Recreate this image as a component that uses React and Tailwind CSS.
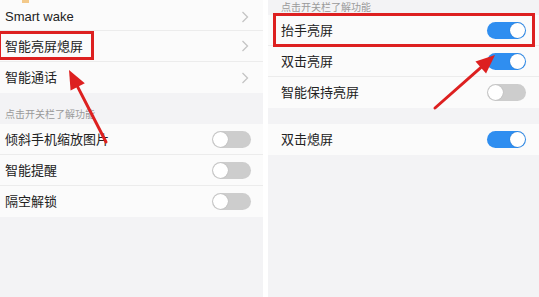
import React from 'react';

const Chevron = () => (
    <svg width="8" height="12" viewBox="0 0 8 12" className="shrink-0">
        <path d="M1.5 1 L6.5 6 L1.5 11" fill="none" stroke="#c4c4c4" strokeWidth="1.3" />
    </svg>
);

const Toggle = ({ on }) => (
    <div className={`w-[39px] h-[17px] rounded-full relative shrink-0 ${on ? 'bg-[#2f8ef0]' : 'bg-[#cdcdcd]'}`}>
        <div className={`absolute top-[1px] w-[15px] h-[15px] rounded-full bg-white shadow-[0_0_1px_rgba(0,0,0,0.3)] ${on ? 'right-[1px]' : 'left-[1px]'}`}></div>
    </div>
);

const Row = ({ label, right, pl, pr, h = 'h-[31px]', last }) => (
    <div className={`${h} ${pl} ${pr} flex items-center justify-between bg-[#fbfbfb] ${last ? '' : 'border-b border-[#ececec]'}`}>
        <span className="text-[13px] text-[#222] leading-none">{label}</span>
        {right}
    </div>
);

const Arrow = ({ x1, y1, x2, y2 }) => {
    const a = Math.atan2(y2 - y1, x2 - x1);
    const len = 19, w = 8;
    const bx = x2 - Math.cos(a) * len, by = y2 - Math.sin(a) * len;
    const px = -Math.sin(a) * w, py = Math.cos(a) * w;
    return (
        <g>
            <line x1={x1} y1={y1} x2={bx} y2={by} stroke="#dd2020" strokeWidth="3" strokeLinecap="round" />
            <polygon points={`${x2},${y2} ${bx + px},${by + py} ${bx - px},${by - py}`} fill="#dd2020" />
        </g>
    );
};

export default function App() {
    return (
        <div className="w-[539px] h-[297px] overflow-hidden relative bg-white flex gap-[5px]" style={{ fontFamily: '"Liberation Sans", "Noto Sans CJK SC", sans-serif' }}>
            {/* left screen */}
            <div className="w-[263px] h-full bg-[#f3f3f5] flex flex-col">
                <div className="h-[3px] bg-[#fbfbfb] pl-[22px]">
                    <div className="w-[7px] h-[3px] bg-[#f3c98a]"></div>
                </div>
                <Row label="Smart wake" h="h-[28px]" pl="pl-[5px]" pr="pr-[14px]" right={<Chevron />} />
                <Row label="智能亮屏熄屏" pl="pl-[5px]" pr="pr-[14px]" right={<Chevron />} />
                <Row label="智能通话" pl="pl-[5px]" pr="pr-[14px]" right={<Chevron />} last />
                <div className="h-[31px] flex items-end pl-[5px] pb-[4px]">
                    <span className="text-[10px] text-[#9a9a9a] leading-none">点击开关栏了解功能</span>
                </div>
                <Row label="倾斜手机缩放图片" pl="pl-[5px]" pr="pr-[12px]" right={<Toggle />} />
                <Row label="智能提醒" pl="pl-[5px]" pr="pr-[12px]" right={<Toggle />} />
                <Row label="隔空解锁" pl="pl-[5px]" pr="pr-[12px]" right={<Toggle />} last />
            </div>

            {/* right screen */}
            <div className="flex-1 h-full bg-[#f3f3f5] flex flex-col">
                <div className="h-[15px] flex items-center pl-[13px]">
                    <span className="text-[10px] text-[#9a9a9a] leading-none">点击开关栏了解功能</span>
                </div>
                <Row label="抬手亮屏" pl="pl-[13px]" pr="pr-[13px]" right={<Toggle on />} />
                <Row label="双击亮屏" pl="pl-[13px]" pr="pr-[13px]" right={<Toggle on />} />
                <Row label="智能保持亮屏" pl="pl-[13px]" pr="pr-[13px]" right={<Toggle />} last />
                <div className="h-[16px]"></div>
                <Row label="双击熄屏" pl="pl-[13px]" pr="pr-[13px]" right={<Toggle on />} last />
            </div>

            {/* annotations */}
            <div className="absolute left-[-2px] top-[31px] w-[96px] h-[29px] border-[3px] border-[#dd2020]"></div>
            <div className="absolute left-[273px] top-[13px] w-[262px] h-[34px] border-[3px] border-[#dd2020]"></div>
            <svg className="absolute inset-0 pointer-events-none" width="539" height="297">
                <Arrow x1={106} y1={142} x2={69} y2={70} />
                <Arrow x1={435} y1={108} x2={495} y2={55} />
            </svg>
        </div>
    );
}
